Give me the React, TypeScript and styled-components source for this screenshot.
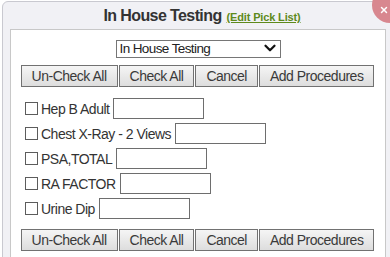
import { ChevronDown, X } from 'lucide-react'
import styled, { createGlobalStyle } from 'styled-components'

const GlobalStyle = createGlobalStyle`
  html, body {
    margin: 0;
    padding: 0;
    background: #ffffff;
    overflow: hidden;
  }
  body {
    font-family: "Liberation Sans", Arial, sans-serif;
    color: #333333;
  }
`

const Dialog = styled.div`
  position: relative;
  width: 396px;
  height: 270px;
  margin: 1px 0 0 2px;
  padding: 0 3px 0 7px;
  box-sizing: border-box;
  background: #f1f1f5;
  border: 1px solid #c9c9d0;
  border-radius: 6px 6px 0 0;
`

const TitleBar = styled.div`
  height: 27px;
  display: flex;
  align-items: center;
  justify-content: center;
  gap: 5px;
  padding-left: 8px;
  padding-right: 8px;
`

const Title = styled.span`
  font-size: 16px;
  font-weight: bold;
  letter-spacing: -0.6px;
  color: #333333;
`

const EditLink = styled.a`
  font-size: 11px;
  font-weight: bold;
  letter-spacing: -0.15px;
  color: #5e8a1c;
  text-decoration: underline;
  margin-top: 3px;
`

const CloseButton = styled.div`
  position: absolute;
  left: 369px;
  top: -15px;
  width: 36px;
  height: 36px;
  border-radius: 50%;
  background: #d8878f;
  color: #ffffff;
`

const CloseIcon = styled(X)`
  position: absolute;
  left: 7px;
  top: 18px;
`

const Panel = styled.div`
  width: 376px;
  height: 240px;
  box-sizing: border-box;
  background: #ffffff;
  border: 1px solid #c8c8c8;
  padding: 9px 0 0 0;
`

const SelectRow = styled.div`
  display: flex;
  justify-content: center;
`

const SelectWrap = styled.div`
  position: relative;
  width: 165px;
  height: 18px;
`

const PickSelect = styled.select`
  appearance: none;
  width: 100%;
  height: 100%;
  box-sizing: border-box;
  border: 1px solid #767676;
  border-radius: 0;
  background: #ffffff;
  padding: 0 0 0 3px;
  font-family: "Liberation Sans", Arial, sans-serif;
  font-size: 13.5px;
  letter-spacing: -0.6px;
  color: #222222;
  outline: none;
`

const SelectArrow = styled(ChevronDown)`
  position: absolute;
  right: 2px;
  top: 0;
  pointer-events: none;
  color: #111111;
`

const ButtonBar = styled.div<{ $top: number }>`
  display: flex;
  justify-content: center;
  gap: 1px;
  margin-top: ${({ $top }) => $top}px;
  padding-right: 1px;
`

const ActionButton = styled.button`
  height: 22px;
  padding: 0 10px;
  border: 1px solid #717171;
  border-radius: 0;
  background: linear-gradient(#f5f5f5, #dddddd);
  font-family: "Liberation Sans", Arial, sans-serif;
  font-size: 14px;
  letter-spacing: -0.5px;
  color: #3a3a3a;
`

const List = styled.div`
  display: flex;
  flex-direction: column;
  padding: 9px 0 8px 14px;
`

const Row = styled.label`
  height: 25px;
  display: flex;
  align-items: center;
  font-size: 14px;
  letter-spacing: -0.5px;
  color: #333333;
`

const Check = styled.input`
  appearance: none;
  width: 13px;
  height: 13px;
  margin: 0 3px 0 0;
  border: 1px solid #5c5c5c;
  border-radius: 0;
  background: #ffffff;
`

const Note = styled.input`
  width: 91px;
  height: 21px;
  box-sizing: border-box;
  margin: 0 0 0 4px;
  border: 1px solid #6e6e6e;
  border-radius: 0;
  padding: 0 3px;
  background: #ffffff;
`

const procedures = ['Hep B Adult', 'Chest X-Ray - 2 Views', 'PSA,TOTAL', 'RA FACTOR', 'Urine Dip']
const actions = ['Un-Check All', 'Check All', 'Cancel', 'Add Procedures']

const Buttons = ({ top }: { top: number }) => (
  <ButtonBar $top={top}>
    {actions.map(a => (
      <ActionButton key={a} type="button">{a}</ActionButton>
    ))}
  </ButtonBar>
)

export default function App() {
  return (
    <>
      <GlobalStyle />
      <Dialog>
        <TitleBar>
          <Title>In House Testing</Title>
          <EditLink href="#">(Edit Pick List)</EditLink>
        </TitleBar>
        <CloseButton>
          <CloseIcon size={10} strokeWidth={3.5} />
        </CloseButton>
        <Panel>
          <SelectRow>
            <SelectWrap>
              <PickSelect defaultValue="inhouse">
                <option value="inhouse">In House Testing</option>
              </PickSelect>
              <SelectArrow size={18} strokeWidth={3} />
            </SelectWrap>
          </SelectRow>
          <Buttons top={8} />
          <List>
            {procedures.map(p => (
              <Row key={p}>
                <Check type="checkbox" />
                {p}
                <Note type="text" />
              </Row>
            ))}
          </List>
          <Buttons top={0} />
        </Panel>
      </Dialog>
    </>
  )
}
